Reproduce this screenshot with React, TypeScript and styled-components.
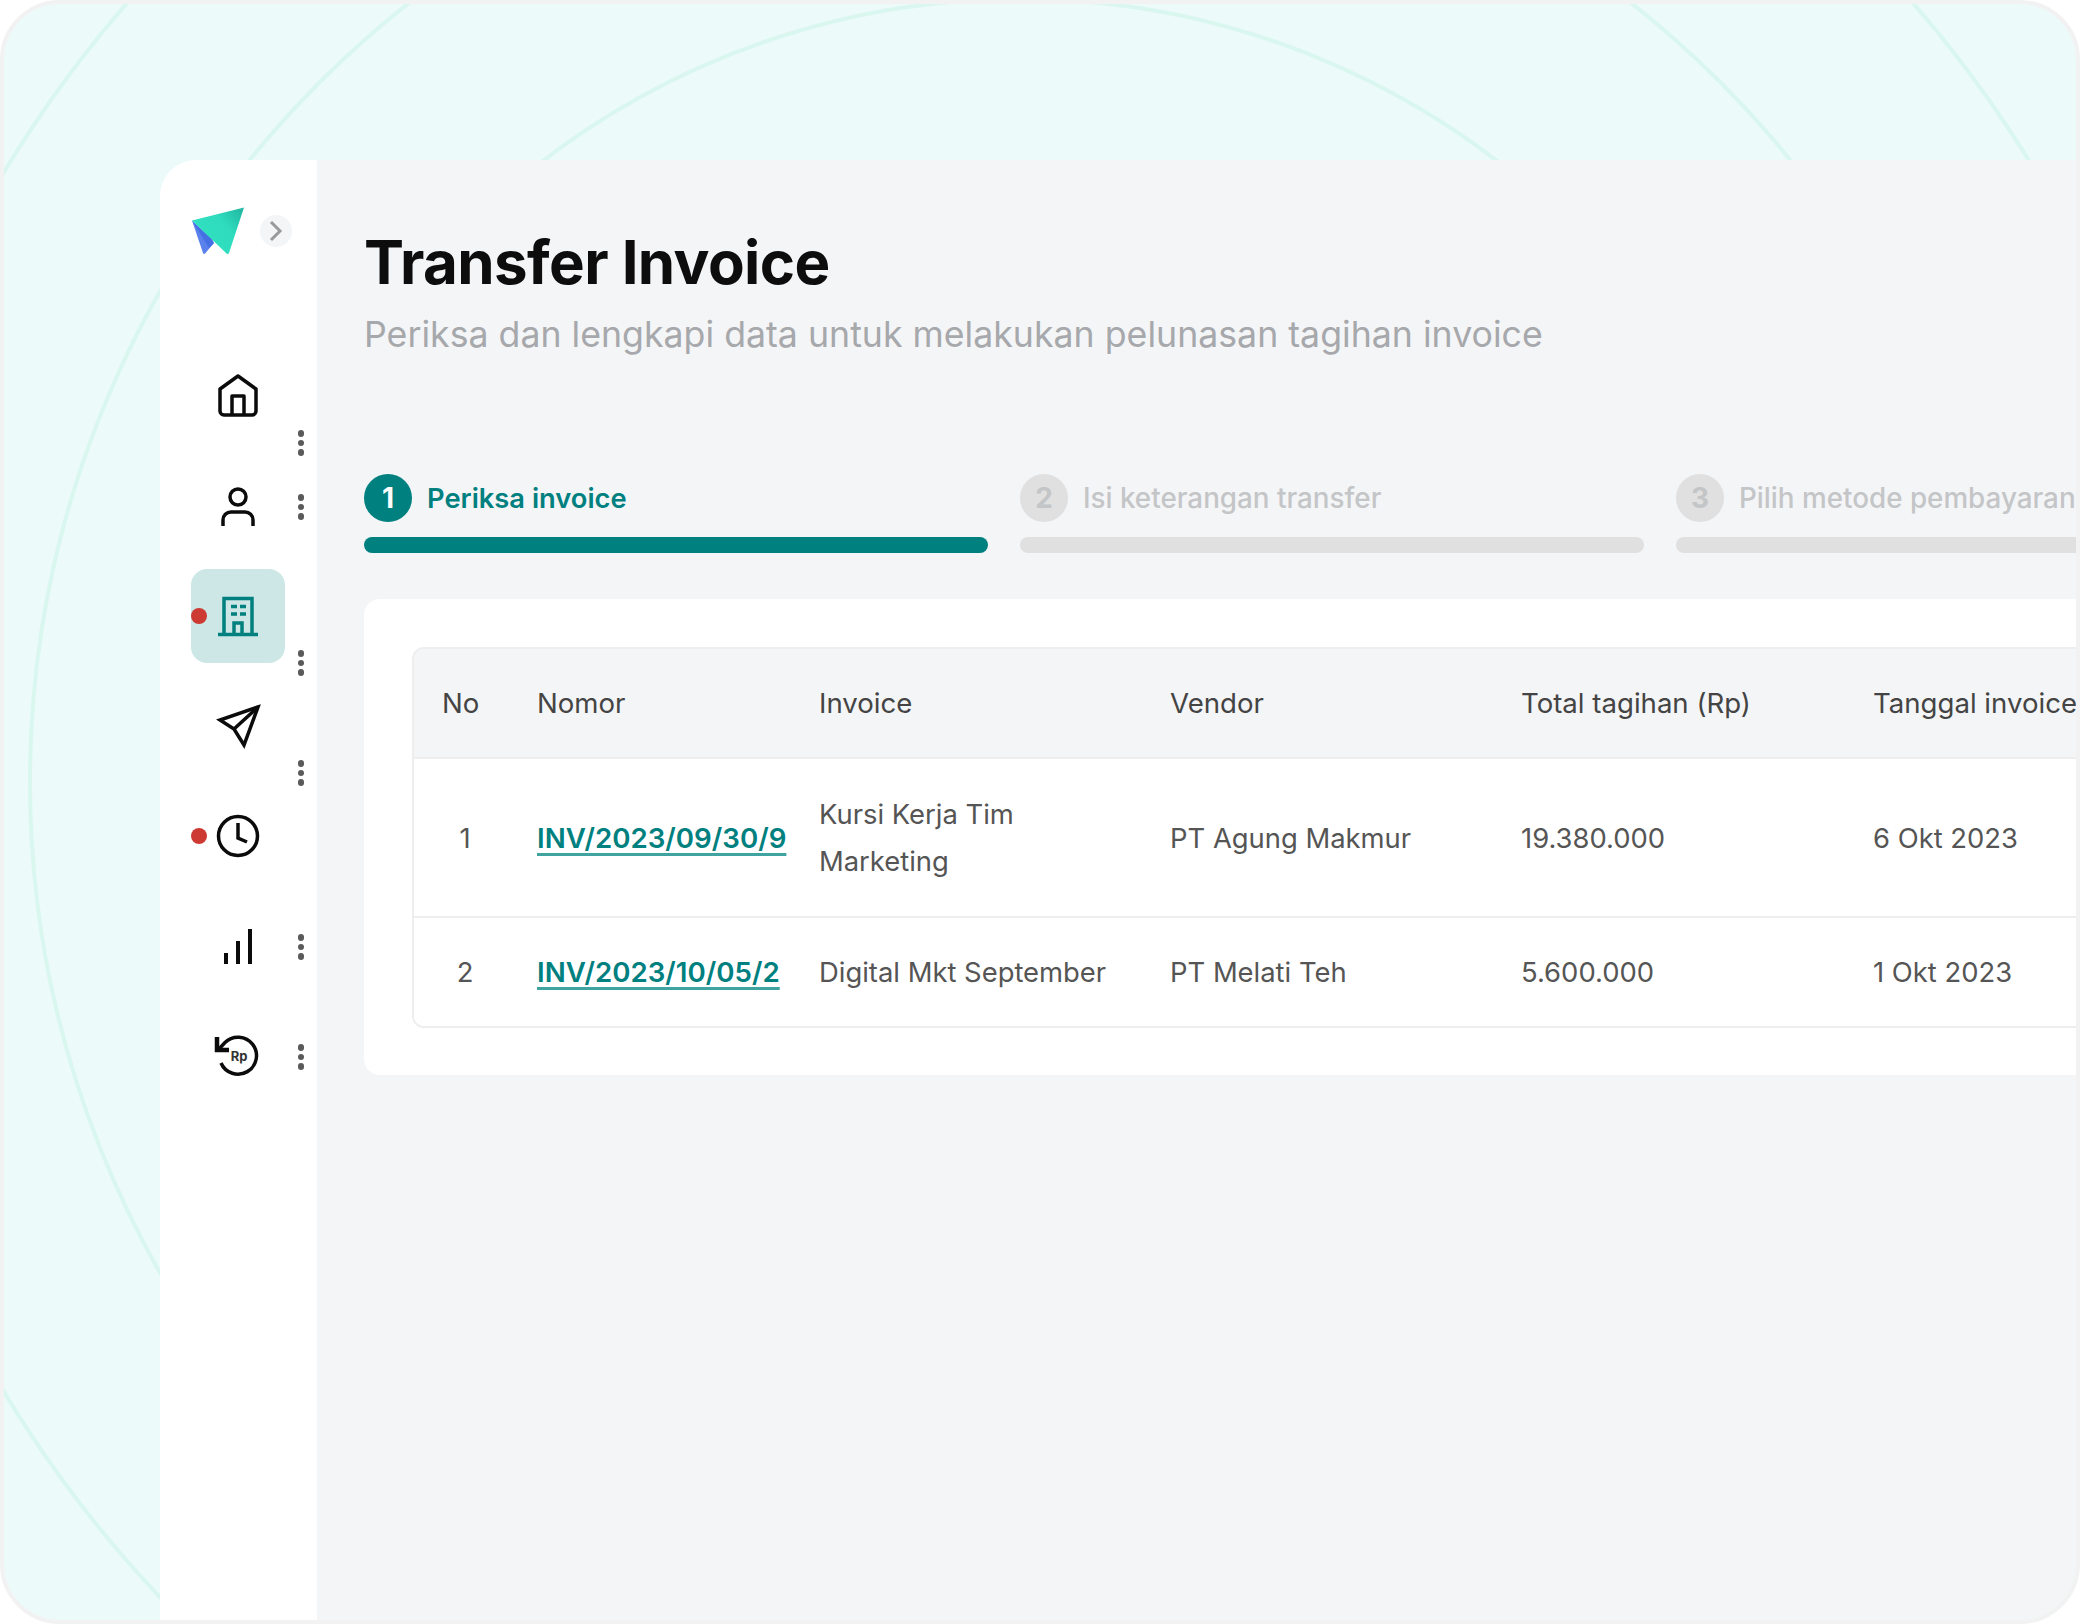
import React from 'react';
import styled, { createGlobalStyle } from 'styled-components';

const Global = createGlobalStyle`
  html, body { margin: 0; padding: 0; background: #fff; }
  * { box-sizing: border-box; }
  body { font-family: Inter, "Noto Sans", sans-serif; }
`;

const Frame = styled.div`
  position: relative;
  width: 2080px;
  height: 1624px;
  border: 4px solid #f2f2f2;
  border-radius: 60px;
  background: #edfafa;
  overflow: hidden;
  padding: 156px 0 0 156px;
`;
const Rings = styled.svg`
  position: absolute;
  left: -4px;
  top: -4px;
  width: 2080px;
  height: 1624px;
`;
const Shell = styled.div`
  position: relative;
  display: flex;
  width: 1916px;
  height: 1460px;
`;
const Sidebar = styled.aside`
  flex: 0 0 157px;
  background: #fff;
  border-top-left-radius: 36px;
  padding: 47px 0 0 31px;
`;
const Brand = styled.div`
  display: flex;
  align-items: center;
  gap: 15px;
  height: 47px;
`;
const Toggle = styled.span`
  display: flex;
  align-items: center;
  justify-content: center;
  width: 32px;
  height: 32px;
  border-radius: 50%;
  background: #f4f5f7;
`;
const Nav = styled.nav`
  display: flex;
  flex-direction: column;
  gap: 16px;
  margin-top: 95px;
`;
const NavItem = styled.div<{ $active?: boolean }>`
  position: relative;
  display: flex;
  align-items: center;
  justify-content: center;
  width: 94px;
  height: 94px;
  border-radius: 16px;
  background: ${p => (p.$active ? '#cde7e6' : 'transparent')};
`;
const Alert = styled.span`
  position: absolute;
  left: 0;
  top: 39px;
  width: 16px;
  height: 16px;
  border-radius: 50%;
  background: #cc3a33;
`;
const Kebab = styled.span<{ $low?: boolean }>`
  position: absolute;
  left: 106.5px;
  top: ${p => (p.$low ? '81px' : '35px')};
  display: flex;
  flex-direction: column;
  gap: 3px;
  i {
    display: block;
    width: 6.5px;
    height: 6.5px;
    border-radius: 50%;
    background: #5a5a5a;
  }
`;
const Main = styled.main`
  flex: 1;
  min-width: 0;
  background: #f4f5f7;
  overflow: hidden;
  padding: 0 0 0 47px;
`;
const Title = styled.h1`
  margin: 66px 0 0;
  font-size: 60px;
  line-height: 72px;
  font-weight: 700;
  letter-spacing: -0.6px;
  color: #0d0d0d;
`;
const Subtitle = styled.p`
  margin: 14px 0 0;
  font-size: 35.7px;
  line-height: 44px;
  font-weight: 400;
  color: #a6a8ab;
`;
const Steps = styled.div`
  display: flex;
  gap: 32px;
  width: 1936px;
  margin-top: 118px;
`;
const Step = styled.div`
  flex: 0 0 624px;
`;
const StepHead = styled.div<{ $on?: boolean }>`
  display: flex;
  align-items: center;
  gap: 15px;
  height: 48px;
  font-size: ${p => (p.$on ? '27.3px' : '27.8px')};
  font-weight: ${p => (p.$on ? 600 : 500)};
  color: ${p => (p.$on ? '#00807f' : '#c4c5c7')};
  white-space: nowrap;
`;
const StepNum = styled.span<{ $on?: boolean }>`
  display: flex;
  align-items: center;
  justify-content: center;
  width: 48px;
  height: 48px;
  border-radius: 50%;
  font-size: 28px;
  font-weight: 700;
  background: ${p => (p.$on ? '#00807f' : '#e0e0e0')};
  color: ${p => (p.$on ? '#fff' : '#c4c5c7')};
`;
const StepBar = styled.div<{ $on?: boolean }>`
  height: 16px;
  margin-top: 15px;
  border-radius: 8px;
  background: ${p => (p.$on ? '#00807f' : '#e0e0e0')};
`;
const Card = styled.section`
  width: 1900px;
  margin-top: 46px;
  padding: 48px 48px 47px;
  background: #fff;
  border-radius: 16px;
`;
const Table = styled.div`
  border: 2px solid #eeeeee;
  border-radius: 12px;
  overflow: hidden;
`;
const Row = styled.div<{ $head?: boolean; $h: number }>`
  display: grid;
  grid-template-columns: 95px 282px 351px 351px 352px 1fr;
  align-items: center;
  height: ${p => p.$h}px;
  padding-left: 28px;
  font-size: ${p => (p.$head ? '27.6px' : '27.4px')};
  color: ${p => (p.$head ? '#444' : '#555')};
  background: ${p => (p.$head ? '#f4f5f7' : '#fff')};
  border-bottom: 2px solid #eeeeee;
  white-space: nowrap;
  &:last-child { border-bottom: 0; }
`;
const Num = styled.span`
  display: block;
  width: 46px;
  text-align: center;
`;
const InvoiceLink = styled.a`
  color: #00807f;
  font-size: 27.7px;
  font-weight: 600;
  white-space: nowrap;
  text-decoration: underline;
  text-decoration-color: #3fa3a0;
  text-decoration-thickness: 3px;
  text-underline-offset: 5px;
`;
const Wrap = styled.span`
  display: block;
  max-width: 310px;
  line-height: 47px;
  white-space: normal;
`;

const S = { fill: 'none', stroke: '#0b0b0b', strokeWidth: 3.5 } as const;

const Home = () => (
  <svg width="48" height="48" viewBox="0 0 48 48" {...S} strokeLinejoin="round">
    <path d="M6 17 L24 4 L42 17 V39 a4 4 0 0 1 -4 4 H10 a4 4 0 0 1 -4 -4 Z" />
    <path d="M18 43 V24 H30 V43" />
  </svg>
);
const Person = () => (
  <svg width="48" height="48" viewBox="0 0 48 48" {...S}>
    <circle cx="24" cy="15" r="8" />
    <path d="M9 44 v-6 a8 8 0 0 1 8 -8 h14 a8 8 0 0 1 8 8 v6" />
  </svg>
);
const Building = () => (
  <svg width="48" height="48" viewBox="0 0 48 48" {...S} stroke="#00807f">
    <path d="M10 42 V6.5 H38 V42" />
    <path d="M4 42.5 H44" />
    <path d="M20 42 V31 H28 V42" />
    <path d="M17 14.5 H23 M26 14.5 H32 M17 22 H23 M26 22 H32" />
  </svg>
);
const Plane = () => (
  <svg width="48" height="48" viewBox="0 0 48 48" {...S} strokeLinejoin="miter">
    <path d="M44 5 L6 18 L20 27 L30 43 Z" />
    <path d="M20 27 L44 5" />
  </svg>
);
const Clock = () => (
  <svg width="48" height="48" viewBox="0 0 48 48" {...S}>
    <circle cx="24" cy="24" r="19.5" />
    <path d="M24 11 V26 L33 30" />
  </svg>
);
const Bars = () => (
  <svg width="48" height="48" viewBox="0 0 48 48" {...S} strokeWidth="4">
    <path d="M12 42 V31 M24 42 V19 M36 42 V7" />
  </svg>
);
const History = () => (
  <svg width="48" height="48" viewBox="0 0 48 48" {...S}>
    <path d="M5 17 L11 10.5 A18.5 18.5 0 1 1 7 31" />
    <path d="M3 5 V18 H15" strokeWidth="4.5" />
    <text x="25" y="29" textAnchor="middle" fontSize="13" fontWeight="700" fill="#333" stroke="none" fontFamily="Inter, sans-serif">Rp</text>
  </svg>
);
const Logo = () => (
  <svg width="54" height="49" viewBox="1 0 54 49">
    <defs>
      <linearGradient id="lg" x1="0.2" y1="0.7" x2="1" y2="0.1">
        <stop offset="0" stopColor="#30e0c0" />
        <stop offset="0.55" stopColor="#2fdcbd" />
        <stop offset="1" stopColor="#22b8a2" />
      </linearGradient>
    </defs>
    <path d="M2 14.5 L13 47 Q14 49 15.5 47 L24 37 Z" fill="#5b82ec" />
    <path d="M2 14.5 L22 33 L24 37 L19 42 Z" fill="#4570e4" />
    <path d="M2 14.5 L54 1.5 L39 47 Q38 49 36 47 L23 34.5 Z" fill="url(#lg)" />
  </svg>
);
const Chevron = () => (
  <svg width="14" height="22" viewBox="0 0 14 22" fill="none" stroke="#9a9a9a" strokeWidth="3">
    <path d="M2 2 L11 11 L2 20" />
  </svg>
);

const Dots = ({ low }: { low?: boolean }) => (
  <Kebab $low={low}><i /><i /><i /></Kebab>
);

export default function App() {
  return (
    <Frame>
      <Global />
      <Rings viewBox="0 0 2080 1624" fill="none" stroke="#d9f7ef" strokeWidth="4">
        <circle cx="1020" cy="782" r="783" />
        <circle cx="1020" cy="782" r="990" />
        <circle cx="1020" cy="782" r="1185" />
      </Rings>
      <Shell>
        <Sidebar>
          <Brand>
            <Logo />
            <Toggle><Chevron /></Toggle>
          </Brand>
          <Nav>
            <NavItem><Home /><Dots low /></NavItem>
            <NavItem><Person /><Dots /></NavItem>
            <NavItem $active><Alert /><Building /><Dots low /></NavItem>
            <NavItem><Plane /><Dots low /></NavItem>
            <NavItem><Alert /><Clock /></NavItem>
            <NavItem><Bars /><Dots /></NavItem>
            <NavItem><History /><Dots /></NavItem>
          </Nav>
        </Sidebar>
        <Main>
          <Title>Transfer Invoice</Title>
          <Subtitle>Periksa dan lengkapi data untuk melakukan pelunasan tagihan invoice</Subtitle>
          <Steps>
            <Step>
              <StepHead $on><StepNum $on>1</StepNum>Periksa invoice</StepHead>
              <StepBar $on />
            </Step>
            <Step>
              <StepHead><StepNum>2</StepNum>Isi keterangan transfer</StepHead>
              <StepBar />
            </Step>
            <Step>
              <StepHead><StepNum>3</StepNum>Pilih metode pembayaran</StepHead>
              <StepBar />
            </Step>
          </Steps>
          <Card>
            <Table>
              <Row $head $h={110}>
                <span>No</span><span>Nomor</span><span>Invoice</span><span>Vendor</span><span>Total tagihan (Rp)</span><span>Tanggal invoice</span>
              </Row>
              <Row $h={159}>
                <Num>1</Num>
                <span><InvoiceLink>INV/2023/09/30/9</InvoiceLink></span>
                <Wrap>Kursi Kerja Tim Marketing</Wrap>
                <span>PT Agung Makmur</span>
                <span>19.380.000</span>
                <span>6 Okt 2023</span>
              </Row>
              <Row $h={108}>
                <Num>2</Num>
                <span><InvoiceLink>INV/2023/10/05/2</InvoiceLink></span>
                <span>Digital Mkt September</span>
                <span>PT Melati Teh</span>
                <span>5.600.000</span>
                <span>1 Okt 2023</span>
              </Row>
            </Table>
          </Card>
        </Main>
      </Shell>
    </Frame>
  );
}
